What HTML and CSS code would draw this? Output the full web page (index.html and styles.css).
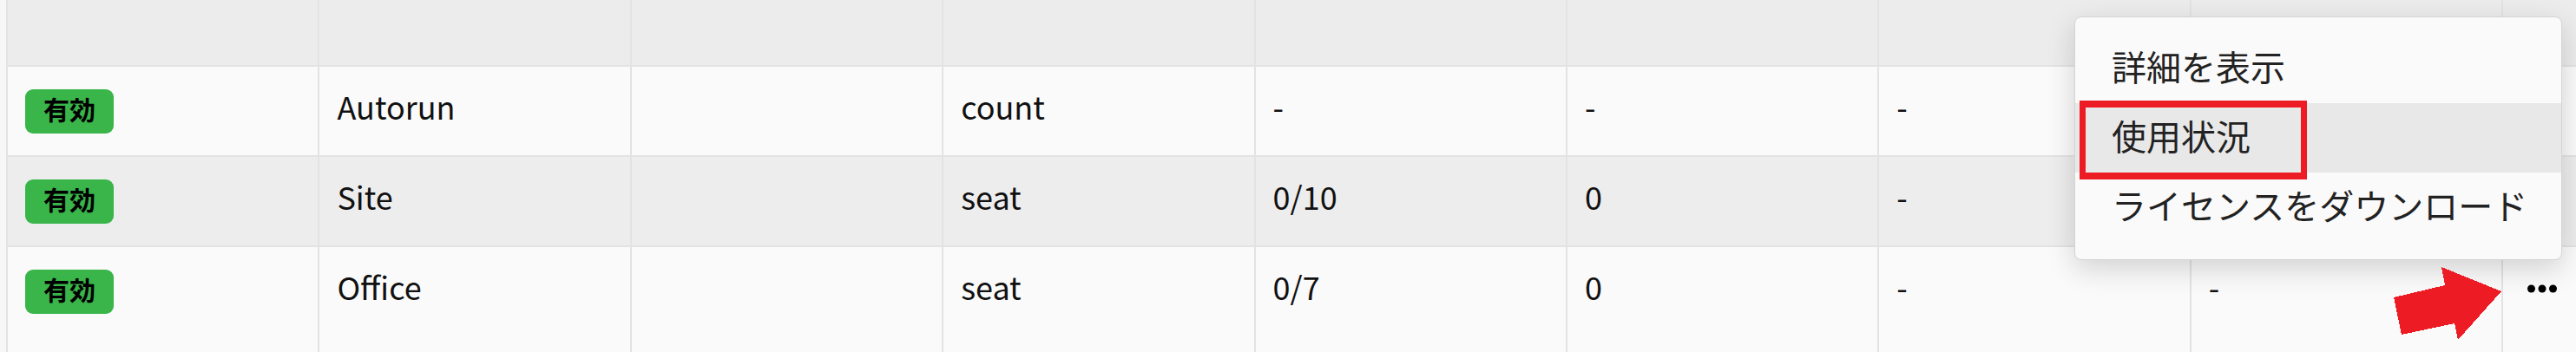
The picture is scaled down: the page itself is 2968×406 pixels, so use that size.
FILE: index.html
```html
<!DOCTYPE html>
<html lang="ja">
<head>
    <meta charset="UTF-8">
    <title>ライセンス一覧</title>
    <link rel="stylesheet" href="styles.css">
</head>
<body>
    <div class="page">
        <div class="license-table">
            <div class="row head">
                <div class="cell"></div>
                <div class="cell"></div>
                <div class="cell"></div>
                <div class="cell"></div>
                <div class="cell"></div>
                <div class="cell"></div>
                <div class="cell"></div>
                <div class="cell"></div>
                <div class="cell"></div>
            </div>
            <div class="row">
                <div class="cell status-cell"><span class="status">有効</span></div>
                <div class="cell">Autorun</div>
                <div class="cell"></div>
                <div class="cell">count</div>
                <div class="cell">-</div>
                <div class="cell">-</div>
                <div class="cell">-</div>
                <div class="cell"></div>
                <div class="cell actions"></div>
            </div>
            <div class="row alt">
                <div class="cell status-cell"><span class="status">有効</span></div>
                <div class="cell">Site</div>
                <div class="cell"></div>
                <div class="cell">seat</div>
                <div class="cell">0/10</div>
                <div class="cell">0</div>
                <div class="cell">-</div>
                <div class="cell"></div>
                <div class="cell actions"></div>
            </div>
            <div class="row last">
                <div class="cell status-cell"><span class="status">有効</span></div>
                <div class="cell">Office</div>
                <div class="cell"></div>
                <div class="cell">seat</div>
                <div class="cell">0/7</div>
                <div class="cell">0</div>
                <div class="cell">-</div>
                <div class="cell">-</div>
                <div class="cell actions">
                    <button class="more-btn" aria-label="メニュー">
                        <svg width="34" height="10" viewBox="0 0 34 10">
                            <circle cx="4.5" cy="5" r="4.5"/>
                            <circle cx="17" cy="5" r="4.5"/>
                            <circle cx="29.5" cy="5" r="4.5"/>
                        </svg>
                    </button>
                </div>
            </div>
        </div>

        <!-- 行メニュー -->
        <div class="row-menu">
            <div class="menu-item">詳細を表示</div>
            <div class="menu-item hover">使用状況</div>
            <div class="menu-item">ライセンスをダウンロード</div>
            <div class="mark-box"></div>
        </div>

        <svg class="mark-arrow" width="140" height="100" viewBox="0 0 140 100">
            <polygon points="8,43 67,29 63,8 132,36 82,92 78,73 17,86"/>
        </svg>
    </div>
</body>
</html>
```

FILE: styles.css
```css
* {
    margin: 0;
    padding: 0;
    box-sizing: border-box;
}

body {
    background-color: #f7f7f7;
    font-family: "Noto Sans CJK JP", "Noto Sans", sans-serif;
    color: #111;
    overflow: hidden;
}

.page {
    position: relative;
    padding-left: 7px;
    height: 406px;
}

.row {
    display: grid;
    grid-template-columns: repeat(8, 359.4px) 1fr;
    height: 104px;
    background-color: #fafafa;
    border-bottom: 2px solid #e3e3e3;
}

.row.head {
    height: 77px;
    background-color: #ececec;
}

.row.alt {
    background-color: #ededed;
}

.row.last {
    height: 130px;
    border-bottom: none;
}

.cell {
    display: flex;
    align-items: center;
    padding: 0 20px 12px;
    border-left: 2px solid #e3e3e3;
    font-size: 36px;
    white-space: nowrap;
    overflow: hidden;
}

.cell.status-cell {
    padding-bottom: 0;
}

.row.last .cell {
    padding-bottom: 40px;
}

.row.last .cell.status-cell {
    padding-bottom: 28px;
}

.cell.actions {
    justify-content: center;
    padding-left: 5px;
    padding-right: 0;
}

.row.last .cell.actions {
    padding-bottom: 34px;
}

.status {
    display: inline-flex;
    align-items: center;
    height: 51px;
    padding: 0 21px 7px;
    border-radius: 9px;
    background-color: #39b54a;
    color: #000;
    font-size: 30px;
    font-weight: bold;
}

.more-btn {
    border: none;
    background: none;
    cursor: pointer;
    display: flex;
}

.more-btn svg {
    fill: #000;
}

.row-menu {
    position: absolute;
    top: 19px;
    right: 16px;
    width: 562px;
    padding: 19px 0 20px;
    background-color: #fafafa;
    border: 1px solid #d4d4d4;
    border-radius: 8px;
    box-shadow: 0 10px 32px rgba(0, 0, 0, 0.16);
}

.menu-item {
    display: flex;
    align-items: center;
    height: 80px;
    padding: 0 0 7px 42px;
    font-size: 40px;
    color: #222;
    cursor: pointer;
}

.menu-item.hover {
    background-color: #e8e8e8;
}

.mark-box {
    position: absolute;
    left: 5px;
    top: 96px;
    width: 262px;
    height: 91px;
    border-style: solid;
    border-color: #ed1c24;
    border-width: 8px 7px;
}

.mark-arrow {
    position: absolute;
    left: 2750px;
    top: 300px;
    fill: #ed1c24;
    shape-rendering: crispEdges;
}
```
